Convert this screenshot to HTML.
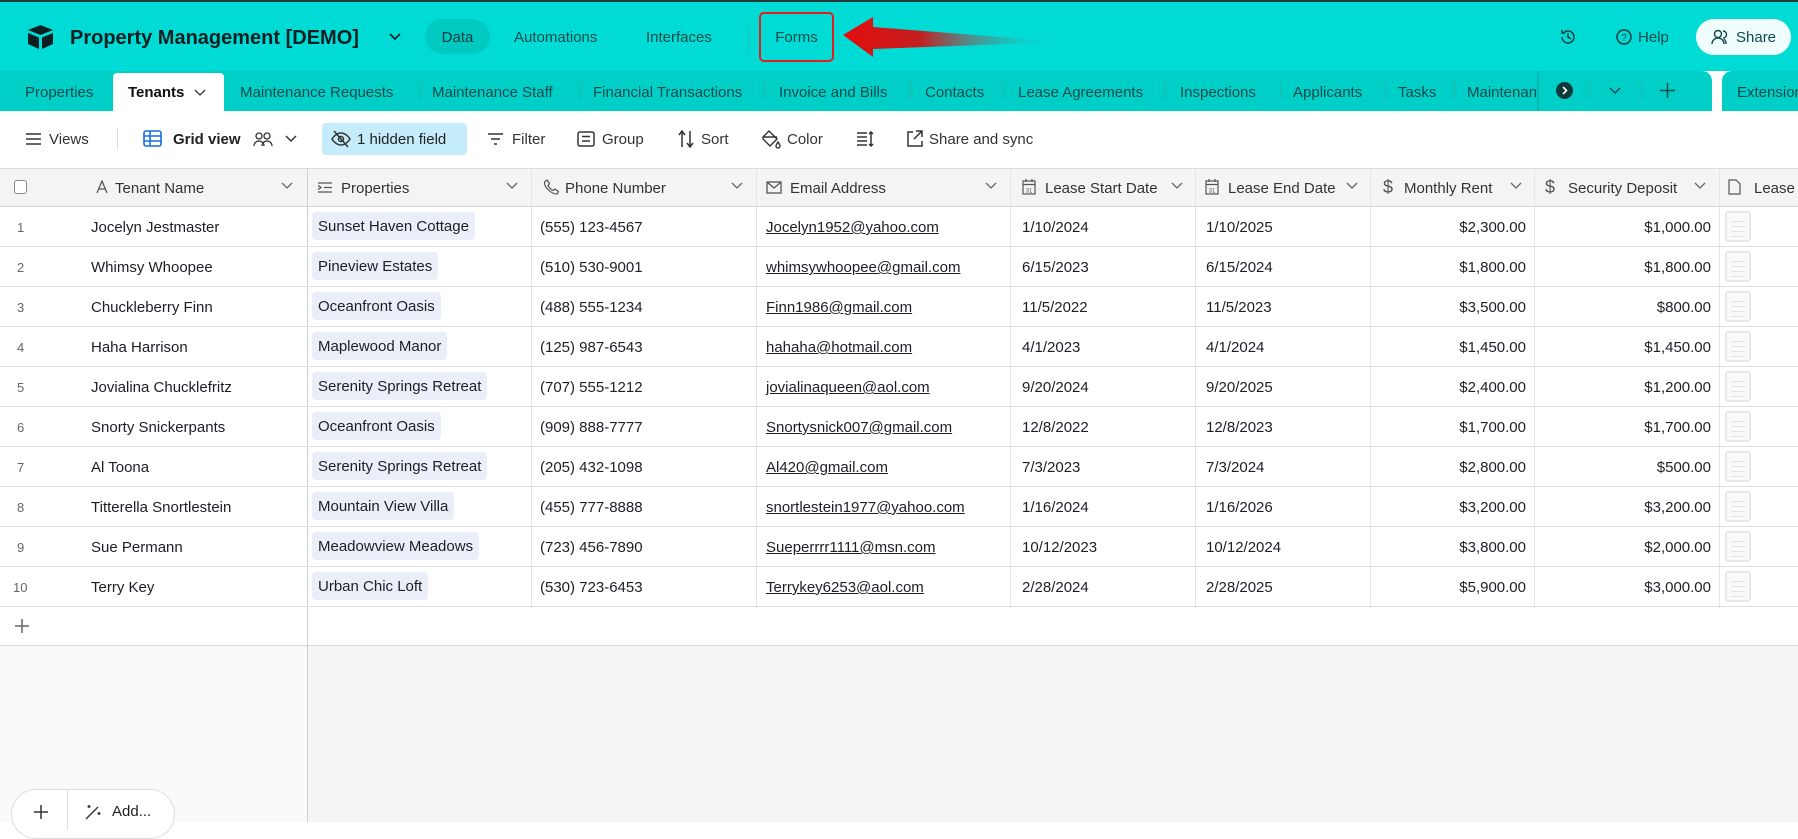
<!DOCTYPE html>
<html><head><meta charset="utf-8"><style>
*{box-sizing:border-box;margin:0;padding:0}
body{width:1798px;height:822px;overflow:hidden;font-family:"Liberation Sans",sans-serif;color:#1d1f25;background:#fff;position:relative}
.a{position:absolute;white-space:nowrap}
.hdr{position:absolute;left:0;top:0;width:1798px;height:71px;background:#00dcd5;border-top:2px solid #1e3a3a}
.tabs{position:absolute;left:0;top:71px;width:1712px;height:40px;background:#00cfc8;border-top-right-radius:10px}
.ext{position:absolute;left:1722px;top:71px;width:80px;height:40px;background:#00cfc8;border-top-left-radius:10px}
.tab{position:absolute;top:71px;height:40px;line-height:40px;font-size:15px;color:#0f4a4a;white-space:nowrap}
.sep{position:absolute;top:82px;width:1px;height:18px;background:#2bb3ad}
.tb{position:absolute;top:128px;font-size:15px;line-height:22px;color:#333;white-space:nowrap}
.hrow{position:absolute;left:0;top:168px;width:1798px;height:39px;background:#f4f4f4;border-top:1px solid #ddd;border-bottom:1px solid #d5d5d5}
.hl{position:absolute;top:178px;font-size:15px;line-height:20px;color:#333;white-space:nowrap}
.vl{position:absolute;width:1px;background:#e5e5e5}
.cell{position:absolute;font-size:15px;line-height:20px;white-space:nowrap}
.pill{position:absolute;height:28px;line-height:26px;padding:2px 6px 0;background:#e9eef9;border-radius:4px;font-size:15px;white-space:nowrap}
.num{position:absolute;font-size:13px;color:#666;line-height:20px}
.em{text-decoration:underline}
.hline{position:absolute;left:0;height:1px;background:#e0e0e0}
.thumb{position:absolute;width:26px;height:31px;border:2px solid #e8e8e8;border-radius:3px;background:#fafafa;background-image:repeating-linear-gradient(#fafafa 0 4px,#e2e2e2 4px 5px);background-size:14px 20px;background-position:4px 4px;background-repeat:no-repeat}
.chev{position:absolute;top:182px}
</style></head><body>
<div class="hdr"></div>
<svg class="a" style="left:27px;top:25px" width="27" height="24" viewBox="0 0 27 24"><path d="M13.5 0L26 5 13.5 10 1 5z" fill="#0b1f22"/><path d="M1 8l11 4.5V24L1 19z" fill="#0b1f22"/><path d="M15 12.5L26 8v11l-11 5z" fill="#0b1f22"/></svg>
<div class="a" style="left:70px;top:25px;font-size:20px;font-weight:bold;color:#0b1f22;line-height:26px">Property Management [DEMO]</div>
<svg class="a" style="left:389px;top:33px" width="12" height="8"><path d="M1 1l5 5 5-5" stroke="#0b1f22" stroke-width="1.6" fill="none"/></svg>
<div class="a" style="left:425px;top:19px;width:65px;height:35px;border-radius:18px;background:#00c9c1;font-size:15px;line-height:37px;text-align:center;color:#0f3d3d">Data</div>
<div class="a" style="left:514px;top:29px;font-size:15px;color:#0f4a4a">Automations</div>
<div class="a" style="left:646px;top:29px;font-size:15px;color:#0f4a4a">Interfaces</div>
<div class="a" style="left:748px;top:20px;width:1px;height:34px;background:#2bbdb7"></div>
<div class="a" style="left:759px;top:12px;width:75px;height:50px;border:2px solid #e21f1f;border-radius:5px;font-size:15px;line-height:48px;text-align:center;color:#0f4a4a">Forms</div>
<svg class="a" style="left:843px;top:15px" width="225" height="45"><defs><linearGradient id="g" x1="0" x2="1"><stop offset="0" stop-color="#e20e0e"/><stop offset=".35" stop-color="#c41e1e"/><stop offset="1" stop-color="#00dcd5" stop-opacity="0"/></linearGradient></defs><path d="M0 20L30 2V12L220 27 30 34V42z" fill="url(#g)"/></svg>
<svg class="a" style="left:1559px;top:28px" width="18" height="18" viewBox="0 0 18 18"><path d="M3 9a6 6 0 1 0 2-4.5M3 2v3h3M9 5v4l3 2" stroke="#0f3d3d" stroke-width="1.5" fill="none"/></svg>
<svg class="a" style="left:1615px;top:28px" width="18" height="18"><circle cx="9" cy="9" r="7" stroke="#0f3d3d" stroke-width="1.5" fill="none"/><text x="9" y="13" font-size="10" text-anchor="middle" fill="#0f3d3d" font-family="Liberation Sans">?</text></svg>
<div class="a" style="left:1638px;top:29px;font-size:15px;color:#0f4a4a">Help</div>
<div class="a" style="left:1696px;top:19px;width:95px;height:36px;border-radius:18px;background:#f0fdfd;font-size:15px;line-height:37px;color:#0f4a4a;padding-left:40px">Share</div>
<svg class="a" style="left:1711px;top:29px" width="22" height="16"><circle cx="7" cy="5" r="3.5" stroke="#0f4a4a" stroke-width="1.4" fill="none"/><path d="M1 15a6 6 0 0 1 12 0M12 2a3.5 3.5 0 0 1 0 7M15 15a6 6 0 0 0-2-5" stroke="#0f4a4a" stroke-width="1.4" fill="none"/></svg>

<div class="tabs"></div><div class="ext"></div>
<div class="a" style="left:113px;top:73px;width:111px;height:38px;background:#fff;border-radius:4px 4px 0 0"></div>
<div class="tab" style="left:25px;top:73px">Properties</div>
<div class="tab" style="left:128px;top:73px;color:#111;font-weight:bold">Tenants</div>
<svg class="a" style="left:194px;top:89px" width="12" height="8"><path d="M1 1l5 5 5-5" stroke="#333" stroke-width="1.3" fill="none"/></svg>
<div class="tab" style="left:240px;top:73px">Maintenance Requests</div><div class="sep" style="left:420px"></div>
<div class="tab" style="left:432px;top:73px">Maintenance Staff</div><div class="sep" style="left:580px"></div>
<div class="tab" style="left:593px;top:73px">Financial Transactions</div><div class="sep" style="left:764px"></div>
<div class="tab" style="left:779px;top:73px">Invoice and Bills</div><div class="sep" style="left:910px"></div>
<div class="tab" style="left:925px;top:73px">Contacts</div><div class="sep" style="left:1003px"></div>
<div class="tab" style="left:1018px;top:73px">Lease Agreements</div><div class="sep" style="left:1165px"></div>
<div class="tab" style="left:1180px;top:73px">Inspections</div><div class="sep" style="left:1280px"></div>
<div class="tab" style="left:1293px;top:73px">Applicants</div><div class="sep" style="left:1385px"></div>
<div class="tab" style="left:1398px;top:73px">Tasks</div><div class="sep" style="left:1454px"></div>
<div class="tab" style="left:1467px;top:73px;width:70px;overflow:hidden">Maintenance</div>
<div class="a" style="left:1537px;top:71px;width:2px;height:40px;background:#00b8b1"></div>
<div class="a" style="left:1556px;top:82px;width:17px;height:17px;border-radius:50%;background:#0d3b3b"></div>
<svg class="a" style="left:1561px;top:86px" width="8" height="9"><path d="M2 1l3.5 3.5L2 8" stroke="#fff" stroke-width="1.6" fill="none"/></svg>
<div class="sep" style="left:1589px"></div>
<svg class="a" style="left:1609px;top:87px" width="12" height="8"><path d="M1 1l5 5 5-5" stroke="#0f4a4a" stroke-width="1.4" fill="none"/></svg>
<div class="sep" style="left:1641px"></div>
<svg class="a" style="left:1659px;top:82px" width="17" height="17"><path d="M8.5 1v15M1 8.5h15" stroke="#0f4a4a" stroke-width="1.5"/></svg>
<div class="tab" style="left:1737px;top:73px">Extensions</div>

<svg class="a" style="left:25px;top:132px" width="17" height="14"><path d="M1 2h15M1 7h15M1 12h15" stroke="#333" stroke-width="1.6"/></svg>
<div class="tb" style="left:49px;top:129px">Views</div>
<div class="a" style="left:117px;top:128px;width:1px;height:22px;background:#ddd"></div>
<svg class="a" style="left:143px;top:130px" width="19" height="17"><rect x="1" y="1" width="17" height="15" rx="2" stroke="#166ee1" stroke-width="1.6" fill="none"/><path d="M1 6h17M1 11h17M7 1v15" stroke="#166ee1" stroke-width="1.6"/></svg>
<div class="tb" style="left:173px;top:129px;font-weight:bold;color:#222">Grid view</div>
<svg class="a" style="left:252px;top:130px" width="22" height="18"><circle cx="7" cy="6" r="3" stroke="#333" stroke-width="1.3" fill="none"/><circle cx="15" cy="6" r="3" stroke="#333" stroke-width="1.3" fill="none"/><path d="M2 16a5 5 0 0 1 10 0M10 16a5 5 0 0 1 10 0" stroke="#333" stroke-width="1.3" fill="none"/></svg>
<svg class="a" style="left:285px;top:135px" width="12" height="8"><path d="M1 1l5 5 5-5" stroke="#333" stroke-width="1.5" fill="none"/></svg>
<div class="a" style="left:322px;top:123px;width:145px;height:32px;border-radius:4px;background:#c4ecfb"></div>
<svg class="a" style="left:331px;top:130px" width="20" height="18"><path d="M1 9s3.5-6 9-6 9 6 9 6-3.5 6-9 6-9-6-9-6z" stroke="#333" stroke-width="1.5" fill="none"/><circle cx="10" cy="9" r="2.5" stroke="#333" stroke-width="1.5" fill="none"/><path d="M3 1l14 16" stroke="#333" stroke-width="1.5"/></svg>
<div class="tb" style="left:357px;top:129px;color:#222">1 hidden field</div>
<svg class="a" style="left:487px;top:133px" width="17" height="12"><path d="M1 1h15M4 6h9M7 11h3" stroke="#333" stroke-width="1.6"/></svg>
<div class="tb" style="left:512px;top:129px">Filter</div>
<svg class="a" style="left:577px;top:131px" width="18" height="16"><rect x="1" y="1" width="16" height="14" rx="2" stroke="#333" stroke-width="1.5" fill="none"/><path d="M5 5.5h8M5 10h8" stroke="#333" stroke-width="1.5"/></svg>
<div class="tb" style="left:602px;top:129px">Group</div>
<svg class="a" style="left:678px;top:130px" width="16" height="18"><path d="M4 17V2M1 5l3-4 3 4M12 1v15M9 13l3 4 3-4" stroke="#333" stroke-width="1.5" fill="none"/></svg>
<div class="tb" style="left:701px;top:129px">Sort</div>
<svg class="a" style="left:760px;top:129px" width="21" height="20"><path d="M3 8l6-6 8 8-7 7-7-7zM3 8h14M18 13s2 3 2 4a2 2 0 0 1-4 0c0-1 2-4 2-4z" stroke="#333" stroke-width="1.4" fill="none"/></svg>
<div class="tb" style="left:787px;top:129px">Color</div>
<svg class="a" style="left:856px;top:131px" width="18" height="16"><path d="M1 2h10M1 6h10M1 10h10M1 14h10M15 1v14M13 3l2-2 2 2M13 13l2 2 2-2" stroke="#333" stroke-width="1.5" fill="none"/></svg>
<svg class="a" style="left:906px;top:130px" width="17" height="17"><path d="M7 2H2v14h14v-5M10 1h6v6M16 1L8 9" stroke="#333" stroke-width="1.5" fill="none"/></svg>
<div class="tb" style="left:929px;top:129px">Share and sync</div>

<div class="hrow"></div>
<div class="a" style="left:14px;top:180px;width:13px;height:14px;border:1.5px solid #888;border-radius:3px;background:#fff"></div>
<svg class="a" style="left:96px;top:180px" width="12" height="14"><path d="M1 13L6 1l5 12M3 9h6" stroke="#555" stroke-width="1.3" fill="none"/></svg>
<div class="hl" style="left:115px;top:179px">Tenant Name</div>
<svg class="a" style="left:317px;top:181px" width="16" height="13"><path d="M1 2h14M7 6.5h8M1 11h14M1 4.5l3 2-3 2" stroke="#555" stroke-width="1.3" fill="none"/></svg>
<div class="hl" style="left:341px;top:179px">Properties</div>
<svg class="a" style="left:543px;top:179px" width="16" height="16" viewBox="0 0 16 16"><path d="M4 1l2.5 3.5-1.5 2c1 2 3 4 5 5l2-1.5 3.5 2.5-1.5 2.5C8 15 1 8 1.5 3z" stroke="#555" stroke-width="1.2" fill="none"/></svg>
<div class="hl" style="left:565px;top:179px">Phone Number</div>
<svg class="a" style="left:766px;top:181px" width="16" height="13"><rect x="1" y="1" width="14" height="11" stroke="#555" stroke-width="1.3" fill="none"/><path d="M1 1l7 6 7-6" stroke="#555" stroke-width="1.3" fill="none"/></svg>
<div class="hl" style="left:790px;top:179px">Email Address</div>
<svg class="a" style="left:1022px;top:179px" width="14" height="16"><rect x="1" y="2" width="12" height="13" stroke="#555" stroke-width="1.2" fill="none"/><path d="M1 5.5h12M4 0v3M10 0v3" stroke="#555" stroke-width="1.2"/><text x="7" y="13.5" font-size="6" text-anchor="middle" fill="#555" font-family="Liberation Sans">31</text></svg>
<div class="hl" style="left:1045px;top:179px">Lease Start Date</div>
<svg class="a" style="left:1205px;top:179px" width="14" height="16"><rect x="1" y="2" width="12" height="13" stroke="#555" stroke-width="1.2" fill="none"/><path d="M1 5.5h12M4 0v3M10 0v3" stroke="#555" stroke-width="1.2"/><text x="7" y="13.5" font-size="6" text-anchor="middle" fill="#555" font-family="Liberation Sans">31</text></svg>
<div class="hl" style="left:1228px;top:179px">Lease End Date</div>
<div class="hl" style="left:1383px;font-size:18px;top:177px;color:#555">$</div>
<div class="hl" style="left:1404px;top:179px">Monthly Rent</div>
<div class="hl" style="left:1545px;font-size:18px;top:177px;color:#555">$</div>
<div class="hl" style="left:1568px;top:179px">Security Deposit</div>
<svg class="a" style="left:1728px;top:179px" width="13" height="16"><path d="M1 1h7l4 4v10H1z" stroke="#555" stroke-width="1.2" fill="none"/></svg>
<div class="hl" style="left:1754px;top:179px">Lease Agreement</div>
<svg class="chev" style="left:281px" width="12" height="8"><path d="M1 1l5 5 5-5" stroke="#666" stroke-width="1.3" fill="none"/></svg>
<svg class="chev" style="left:506px" width="12" height="8"><path d="M1 1l5 5 5-5" stroke="#666" stroke-width="1.3" fill="none"/></svg>
<svg class="chev" style="left:731px" width="12" height="8"><path d="M1 1l5 5 5-5" stroke="#666" stroke-width="1.3" fill="none"/></svg>
<svg class="chev" style="left:985px" width="12" height="8"><path d="M1 1l5 5 5-5" stroke="#666" stroke-width="1.3" fill="none"/></svg>
<svg class="chev" style="left:1171px" width="12" height="8"><path d="M1 1l5 5 5-5" stroke="#666" stroke-width="1.3" fill="none"/></svg>
<svg class="chev" style="left:1346px" width="12" height="8"><path d="M1 1l5 5 5-5" stroke="#666" stroke-width="1.3" fill="none"/></svg>
<svg class="chev" style="left:1510px" width="12" height="8"><path d="M1 1l5 5 5-5" stroke="#666" stroke-width="1.3" fill="none"/></svg>
<svg class="chev" style="left:1694px" width="12" height="8"><path d="M1 1l5 5 5-5" stroke="#666" stroke-width="1.3" fill="none"/></svg>

<div class="a" style="left:0;top:646px;width:307px;height:176px;background:#fafafa"></div>
<div class="a" style="left:308px;top:646px;width:1490px;height:176px;background:#f5f5f5"></div>
<div class="hline" style="top:645px;width:1798px;background:#d8d8d8"></div>
<div class="a" style="left:307px;top:168px;width:1px;height:654px;background:#cfcfcf"></div>
<div class="vl" style="left:531px;top:168px;height:440px"></div>
<div class="vl" style="left:756px;top:168px;height:440px"></div>
<div class="vl" style="left:1010px;top:168px;height:440px"></div>
<div class="vl" style="left:1195px;top:168px;height:440px"></div>
<div class="vl" style="left:1370px;top:168px;height:440px"></div>
<div class="vl" style="left:1534px;top:168px;height:440px"></div>
<div class="vl" style="left:1719px;top:168px;height:440px"></div>

<div class="hline" style="top:246px;width:1798px"></div>
<div class="hline" style="top:286px;width:1798px"></div>
<div class="hline" style="top:326px;width:1798px"></div>
<div class="hline" style="top:366px;width:1798px"></div>
<div class="hline" style="top:406px;width:1798px"></div>
<div class="hline" style="top:446px;width:1798px"></div>
<div class="hline" style="top:486px;width:1798px"></div>
<div class="hline" style="top:526px;width:1798px"></div>
<div class="hline" style="top:566px;width:1798px"></div>
<div class="hline" style="top:606px;width:1798px"></div>

<div class="num" style="left:17px;top:218px">1</div><div class="cell" style="left:91px;top:218px">Jocelyn Jestmaster</div><div class="pill" style="left:312px;top:212px">Sunset Haven Cottage</div><div class="cell" style="left:540px;top:218px">(555) 123-4567</div><div class="cell em" style="left:766px;top:218px">Jocelyn1952@yahoo.com</div><div class="cell" style="left:1022px;top:218px">1/10/2024</div><div class="cell" style="left:1206px;top:218px">1/10/2025</div><div class="cell" style="left:370px;width:1156px;top:218px;text-align:right">$2,300.00</div><div class="cell" style="left:711px;width:1000px;top:218px;text-align:right">$1,000.00</div><div class="thumb" style="left:1725px;top:211px"></div>

<div class="num" style="left:17px;top:258px">2</div><div class="cell" style="left:91px;top:258px">Whimsy Whoopee</div><div class="pill" style="left:312px;top:252px">Pineview Estates</div><div class="cell" style="left:540px;top:258px">(510) 530-9001</div><div class="cell em" style="left:766px;top:258px">whimsywhoopee@gmail.com</div><div class="cell" style="left:1022px;top:258px">6/15/2023</div><div class="cell" style="left:1206px;top:258px">6/15/2024</div><div class="cell" style="left:370px;width:1156px;top:258px;text-align:right">$1,800.00</div><div class="cell" style="left:711px;width:1000px;top:258px;text-align:right">$1,800.00</div><div class="thumb" style="left:1725px;top:251px"></div>

<div class="num" style="left:17px;top:298px">3</div><div class="cell" style="left:91px;top:298px">Chuckleberry Finn</div><div class="pill" style="left:312px;top:292px">Oceanfront Oasis</div><div class="cell" style="left:540px;top:298px">(488) 555-1234</div><div class="cell em" style="left:766px;top:298px">Finn1986@gmail.com</div><div class="cell" style="left:1022px;top:298px">11/5/2022</div><div class="cell" style="left:1206px;top:298px">11/5/2023</div><div class="cell" style="left:370px;width:1156px;top:298px;text-align:right">$3,500.00</div><div class="cell" style="left:711px;width:1000px;top:298px;text-align:right">$800.00</div><div class="thumb" style="left:1725px;top:291px"></div>

<div class="num" style="left:17px;top:338px">4</div><div class="cell" style="left:91px;top:338px">Haha Harrison</div><div class="pill" style="left:312px;top:332px">Maplewood Manor</div><div class="cell" style="left:540px;top:338px">(125) 987-6543</div><div class="cell em" style="left:766px;top:338px">hahaha@hotmail.com</div><div class="cell" style="left:1022px;top:338px">4/1/2023</div><div class="cell" style="left:1206px;top:338px">4/1/2024</div><div class="cell" style="left:370px;width:1156px;top:338px;text-align:right">$1,450.00</div><div class="cell" style="left:711px;width:1000px;top:338px;text-align:right">$1,450.00</div><div class="thumb" style="left:1725px;top:331px"></div>

<div class="num" style="left:17px;top:378px">5</div><div class="cell" style="left:91px;top:378px">Jovialina Chucklefritz</div><div class="pill" style="left:312px;top:372px">Serenity Springs Retreat</div><div class="cell" style="left:540px;top:378px">(707) 555-1212</div><div class="cell em" style="left:766px;top:378px">jovialinaqueen@aol.com</div><div class="cell" style="left:1022px;top:378px">9/20/2024</div><div class="cell" style="left:1206px;top:378px">9/20/2025</div><div class="cell" style="left:370px;width:1156px;top:378px;text-align:right">$2,400.00</div><div class="cell" style="left:711px;width:1000px;top:378px;text-align:right">$1,200.00</div><div class="thumb" style="left:1725px;top:371px"></div>

<div class="num" style="left:17px;top:418px">6</div><div class="cell" style="left:91px;top:418px">Snorty Snickerpants</div><div class="pill" style="left:312px;top:412px">Oceanfront Oasis</div><div class="cell" style="left:540px;top:418px">(909) 888-7777</div><div class="cell em" style="left:766px;top:418px">Snortysnick007@gmail.com</div><div class="cell" style="left:1022px;top:418px">12/8/2022</div><div class="cell" style="left:1206px;top:418px">12/8/2023</div><div class="cell" style="left:370px;width:1156px;top:418px;text-align:right">$1,700.00</div><div class="cell" style="left:711px;width:1000px;top:418px;text-align:right">$1,700.00</div><div class="thumb" style="left:1725px;top:411px"></div>

<div class="num" style="left:17px;top:458px">7</div><div class="cell" style="left:91px;top:458px">Al Toona</div><div class="pill" style="left:312px;top:452px">Serenity Springs Retreat</div><div class="cell" style="left:540px;top:458px">(205) 432-1098</div><div class="cell em" style="left:766px;top:458px">Al420@gmail.com</div><div class="cell" style="left:1022px;top:458px">7/3/2023</div><div class="cell" style="left:1206px;top:458px">7/3/2024</div><div class="cell" style="left:370px;width:1156px;top:458px;text-align:right">$2,800.00</div><div class="cell" style="left:711px;width:1000px;top:458px;text-align:right">$500.00</div><div class="thumb" style="left:1725px;top:451px"></div>

<div class="num" style="left:17px;top:498px">8</div><div class="cell" style="left:91px;top:498px">Titterella Snortlestein</div><div class="pill" style="left:312px;top:492px">Mountain View Villa</div><div class="cell" style="left:540px;top:498px">(455) 777-8888</div><div class="cell em" style="left:766px;top:498px">snortlestein1977@yahoo.com</div><div class="cell" style="left:1022px;top:498px">1/16/2024</div><div class="cell" style="left:1206px;top:498px">1/16/2026</div><div class="cell" style="left:370px;width:1156px;top:498px;text-align:right">$3,200.00</div><div class="cell" style="left:711px;width:1000px;top:498px;text-align:right">$3,200.00</div><div class="thumb" style="left:1725px;top:491px"></div>

<div class="num" style="left:17px;top:538px">9</div><div class="cell" style="left:91px;top:538px">Sue Permann</div><div class="pill" style="left:312px;top:532px">Meadowview Meadows</div><div class="cell" style="left:540px;top:538px">(723) 456-7890</div><div class="cell em" style="left:766px;top:538px">Sueperrrr1111@msn.com</div><div class="cell" style="left:1022px;top:538px">10/12/2023</div><div class="cell" style="left:1206px;top:538px">10/12/2024</div><div class="cell" style="left:370px;width:1156px;top:538px;text-align:right">$3,800.00</div><div class="cell" style="left:711px;width:1000px;top:538px;text-align:right">$2,000.00</div><div class="thumb" style="left:1725px;top:531px"></div>

<div class="num" style="left:13px;top:578px">10</div><div class="cell" style="left:91px;top:578px">Terry Key</div><div class="pill" style="left:312px;top:572px">Urban Chic Loft</div><div class="cell" style="left:540px;top:578px">(530) 723-6453</div><div class="cell em" style="left:766px;top:578px">Terrykey6253@aol.com</div><div class="cell" style="left:1022px;top:578px">2/28/2024</div><div class="cell" style="left:1206px;top:578px">2/28/2025</div><div class="cell" style="left:370px;width:1156px;top:578px;text-align:right">$5,900.00</div><div class="cell" style="left:711px;width:1000px;top:578px;text-align:right">$3,000.00</div><div class="thumb" style="left:1725px;top:571px"></div>

<svg class="a" style="left:14px;top:618px" width="16" height="16"><path d="M8 1v14M1 8h14" stroke="#666" stroke-width="1.5"/></svg>

<div class="a" style="left:11px;top:789px;width:164px;height:50px;border:1px solid #ddd;border-radius:25px;background:#fff"></div>
<div class="a" style="left:67px;top:790px;width:1px;height:40px;background:#ddd"></div>
<svg class="a" style="left:33px;top:804px" width="16" height="16"><path d="M8 1v14M1 8h14" stroke="#333" stroke-width="1.5"/></svg>
<svg class="a" style="left:84px;top:803px" width="18" height="18"><path d="M2 16L12 6M12 6l2-2M5 2v3M3.5 3.5h3M15 9v3M13.5 10.5h3" stroke="#333" stroke-width="1.4" fill="none"/></svg>
<div class="a" style="left:112px;top:803px;font-size:15px;color:#222">Add...</div>
</body></html>
